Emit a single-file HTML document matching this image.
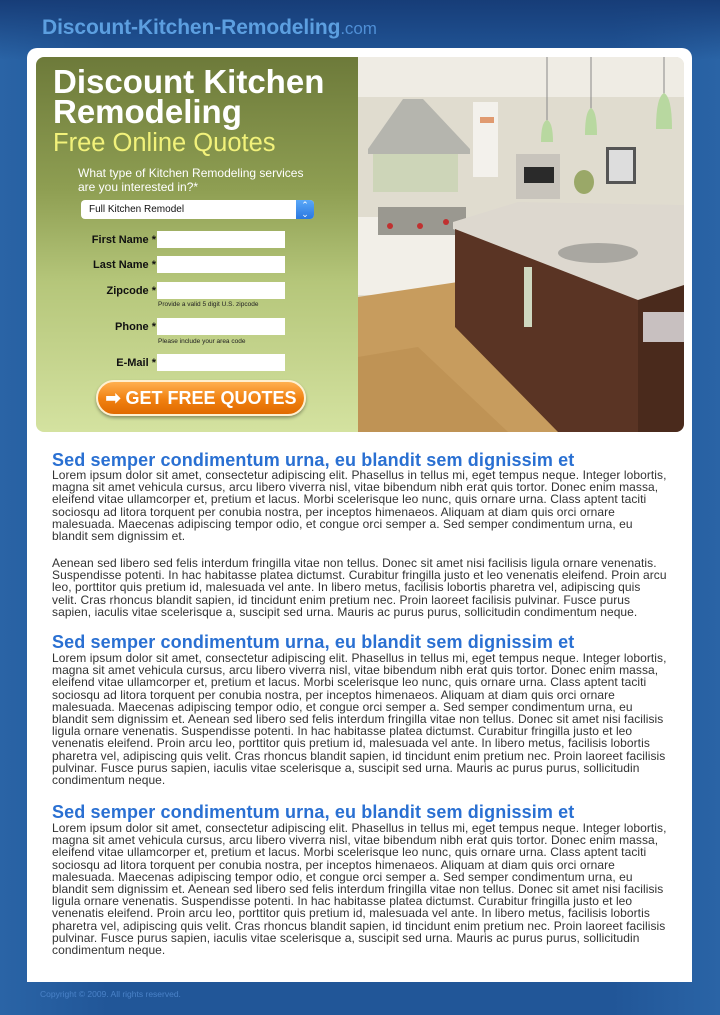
<!DOCTYPE html>
<html><head><meta charset="utf-8"><style>
*{margin:0;padding:0;box-sizing:border-box}
body{width:720px;height:1015px;overflow:hidden;font-family:"Liberation Sans",Arial,sans-serif;background:linear-gradient(90deg,#2a64a6 0%,#215698 15%,#215698 85%,#2a64a6 100%);position:relative}
.topbg{position:absolute;left:0;top:0;width:720px;height:60px;background:linear-gradient(#173d78,rgba(31,82,148,0))}
.logo{position:absolute;left:42px;top:16px;font-size:21px;font-weight:bold;color:#5c9fe0;letter-spacing:-0.1px}
.logo span{font-weight:normal;font-size:17px;color:#4f8fd6}
.panel{position:absolute;left:27px;top:48px;width:665px;height:934px;background:#fff;border-radius:10px 10px 0 0}
.hero{position:absolute;left:36px;top:57px;width:648px;height:375px;border-radius:8px;overflow:hidden}
.green{position:absolute;left:0;top:0;width:322px;height:375px;background:linear-gradient(#6d7a3a 0%,#8e9e52 35%,#b5c67a 60%,#d4e2a0 100%)}
.t1{position:absolute;left:17px;top:10px;color:#fff;font-weight:bold;font-size:33px;line-height:30px;letter-spacing:0}
.t2{position:absolute;left:17px;top:72px;color:#f2f27a;font-size:25.5px}
.q{position:absolute;left:42px;top:109px;color:#fff;font-size:12px;line-height:14px}
.sel{position:absolute;left:45px;top:143px;width:233px;height:19px;background:#fff;border-radius:4px;font-size:10px;padding:4px 8px;color:#111}
.sel i{position:absolute;right:0;top:0;width:18px;height:19px;background:linear-gradient(#5aa8f8,#2a78e0);border-radius:0 4px 4px 0;color:#fff;font-style:normal;font-size:9px;text-align:center;line-height:9px;padding-top:1px}
.lab{position:absolute;width:120px;left:0;text-align:right;font-size:11px;font-weight:bold;color:#111}
.inp{position:absolute;left:121px;width:128px;height:17px;background:#fff}
.hint{position:absolute;left:122px;font-size:6.5px;color:#222}
.btn{position:absolute;left:60px;top:323px;width:210px;height:36px;border-radius:18px;background:linear-gradient(#ffb050,#f08010 55%,#e06a00);border:2px solid #fff0d0;box-shadow:0 2px 3px rgba(0,0,0,.35);color:#fff;font-weight:bold;font-size:18px;text-align:center;line-height:32px}
.txt{position:absolute;left:52px;width:630px;font-size:12px;line-height:12.2px;color:#333;white-space:nowrap;letter-spacing:0.07px}
.h{position:absolute;left:52px;font-size:18px;font-weight:bold;color:#2a70d2;line-height:18px;letter-spacing:0.13px}
.foot{position:absolute;left:40px;top:989px;font-size:8.5px;color:#4a82c8}
</style></head><body>
<div class="topbg"></div>
<div class="logo">Discount-Kitchen-Remodeling<span>.com</span></div>
<div class="panel"></div>
<div class="hero">
<div class="green">
<div class="t1">Discount Kitchen<br>Remodeling</div>
<div class="t2">Free Online Quotes</div>
<div class="q">What type of Kitchen Remodeling services<br>are you interested in?*</div>
<div class="sel">Full Kitchen Remodel<i>⌃<br>⌄</i></div>
<div class="lab" style="top:177px">First Name *</div><div class="inp" style="top:174px"></div>
<div class="lab" style="top:202px">Last Name *</div><div class="inp" style="top:199px"></div>
<div class="lab" style="top:228px">Zipcode *</div><div class="inp" style="top:225px"></div>
<div class="hint" style="top:244px">Provide a valid 5 digit U.S. zipcode</div>
<div class="lab" style="top:264px">Phone *</div><div class="inp" style="top:261px"></div>
<div class="hint" style="top:281px">Please include your area code</div>
<div class="lab" style="top:300px">E-Mail *</div><div class="inp" style="top:297px"></div>
<div class="btn">➡ GET FREE QUOTES</div>
</div>
<svg style="position:absolute;left:322px;top:0" width="326" height="375" viewBox="0 0 326 375">
<rect width="326" height="375" fill="#e0dccf"/>
<rect x="0" y="0" width="326" height="40" fill="#efece4"/>
<rect x="115" y="45" width="25" height="75" fill="#f3f1ec"/>
<rect x="122" y="60" width="14" height="6" fill="#e09a70"/>
<rect x="15" y="95" width="85" height="40" fill="#cdd5b8"/>
<polygon points="10,92 45,42 65,42 112,92 112,97 10,97" fill="#b5b5ae"/>
<rect x="158" y="97" width="44" height="45" fill="#c8c4bc"/>
<rect x="166" y="110" width="30" height="16" fill="#2a2a2a"/>
<rect x="248" y="90" width="30" height="37" fill="#555"/><rect x="251" y="93" width="24" height="31" fill="#ddd"/>
<ellipse cx="226" cy="125" rx="10" ry="12" fill="#9aa868"/>
<line x1="189" y1="0" x2="189" y2="65" stroke="#888"/><path d="M183 85 Q183 65 189 63 Q195 65 195 85Z" fill="#b8d8a0"/>
<line x1="233" y1="0" x2="233" y2="52" stroke="#888"/><path d="M227 78 Q227 54 233 51 Q239 54 239 78Z" fill="#b8d8a0"/>
<line x1="306" y1="0" x2="306" y2="38" stroke="#888"/><path d="M298 72 Q298 40 306 36 Q314 40 314 72Z" fill="#b8d8a0"/>
<rect x="0" y="160" width="97" height="78" fill="#f2efe8"/>
<rect x="20" y="150" width="88" height="28" fill="#9a9890"/>
<circle cx="32" cy="169" r="3" fill="#c03030"/><circle cx="62" cy="169" r="3" fill="#c03030"/><circle cx="88" cy="165" r="3" fill="#c03030"/>
<polygon points="0,240 100,225 100,270 210,375 0,375" fill="#c79c5e"/>
<polygon points="0,300 60,290 150,375 0,375" fill="#b88a4c" opacity=".5"/>
<polygon points="95,165 160,145 326,148 326,232 280,243 95,172" fill="#ddd8cf"/>
<polygon points="97,172 280,243 280,375 200,375 97,270" fill="#5a3424"/>
<polygon points="280,243 326,228 326,375 280,375" fill="#4a2a1c"/>
<ellipse cx="240" cy="196" rx="40" ry="10" fill="#a9a7a1"/>
<rect x="166" y="210" width="8" height="60" fill="#cfd8c0"/>
<rect x="285" y="255" width="41" height="30" fill="#c8c0c0"/>
</svg>
</div>
<div class="h" style="top:451px">Sed semper condimentum urna, eu blandit sem dignissim et</div>
<div class="txt" style="top:469px">Lorem ipsum dolor sit amet, consectetur adipiscing elit. Phasellus in tellus mi, eget tempus neque. Integer lobortis,<br>magna sit amet vehicula cursus, arcu libero viverra nisl, vitae bibendum nibh erat quis tortor. Donec enim massa,<br>eleifend vitae ullamcorper et, pretium et lacus. Morbi scelerisque leo nunc, quis ornare urna. Class aptent taciti<br>sociosqu ad litora torquent per conubia nostra, per inceptos himenaeos. Aliquam at diam quis orci ornare<br>malesuada. Maecenas adipiscing tempor odio, et congue orci semper a. Sed semper condimentum urna, eu<br>blandit sem dignissim et.</div>
<div class="txt" style="top:557px">Aenean sed libero sed felis interdum fringilla vitae non tellus. Donec sit amet nisi facilisis ligula ornare venenatis.<br>Suspendisse potenti. In hac habitasse platea dictumst. Curabitur fringilla justo et leo venenatis eleifend. Proin arcu<br>leo, porttitor quis pretium id, malesuada vel ante. In libero metus, facilisis lobortis pharetra vel, adipiscing quis<br>velit. Cras rhoncus blandit sapien, id tincidunt enim pretium nec. Proin laoreet facilisis pulvinar. Fusce purus<br>sapien, iaculis vitae scelerisque a, suscipit sed urna. Mauris ac purus purus, sollicitudin condimentum neque.</div>
<div class="h" style="top:633px">Sed semper condimentum urna, eu blandit sem dignissim et</div>
<div class="txt" style="top:652px">Lorem ipsum dolor sit amet, consectetur adipiscing elit. Phasellus in tellus mi, eget tempus neque. Integer lobortis,<br>magna sit amet vehicula cursus, arcu libero viverra nisl, vitae bibendum nibh erat quis tortor. Donec enim massa,<br>eleifend vitae ullamcorper et, pretium et lacus. Morbi scelerisque leo nunc, quis ornare urna. Class aptent taciti<br>sociosqu ad litora torquent per conubia nostra, per inceptos himenaeos. Aliquam at diam quis orci ornare<br>malesuada. Maecenas adipiscing tempor odio, et congue orci semper a. Sed semper condimentum urna, eu<br>blandit sem dignissim et. Aenean sed libero sed felis interdum fringilla vitae non tellus. Donec sit amet nisi facilisis<br>ligula ornare venenatis. Suspendisse potenti. In hac habitasse platea dictumst. Curabitur fringilla justo et leo<br>venenatis eleifend. Proin arcu leo, porttitor quis pretium id, malesuada vel ante. In libero metus, facilisis lobortis<br>pharetra vel, adipiscing quis velit. Cras rhoncus blandit sapien, id tincidunt enim pretium nec. Proin laoreet facilisis<br>pulvinar. Fusce purus sapien, iaculis vitae scelerisque a, suscipit sed urna. Mauris ac purus purus, sollicitudin<br>condimentum neque.</div>
<div class="h" style="top:803px">Sed semper condimentum urna, eu blandit sem dignissim et</div>
<div class="txt" style="top:822px">Lorem ipsum dolor sit amet, consectetur adipiscing elit. Phasellus in tellus mi, eget tempus neque. Integer lobortis,<br>magna sit amet vehicula cursus, arcu libero viverra nisl, vitae bibendum nibh erat quis tortor. Donec enim massa,<br>eleifend vitae ullamcorper et, pretium et lacus. Morbi scelerisque leo nunc, quis ornare urna. Class aptent taciti<br>sociosqu ad litora torquent per conubia nostra, per inceptos himenaeos. Aliquam at diam quis orci ornare<br>malesuada. Maecenas adipiscing tempor odio, et congue orci semper a. Sed semper condimentum urna, eu<br>blandit sem dignissim et. Aenean sed libero sed felis interdum fringilla vitae non tellus. Donec sit amet nisi facilisis<br>ligula ornare venenatis. Suspendisse potenti. In hac habitasse platea dictumst. Curabitur fringilla justo et leo<br>venenatis eleifend. Proin arcu leo, porttitor quis pretium id, malesuada vel ante. In libero metus, facilisis lobortis<br>pharetra vel, adipiscing quis velit. Cras rhoncus blandit sapien, id tincidunt enim pretium nec. Proin laoreet facilisis<br>pulvinar. Fusce purus sapien, iaculis vitae scelerisque a, suscipit sed urna. Mauris ac purus purus, sollicitudin<br>condimentum neque.</div>
<div class="foot">Copyright © 2009. All rights reserved.</div>
</body></html>
